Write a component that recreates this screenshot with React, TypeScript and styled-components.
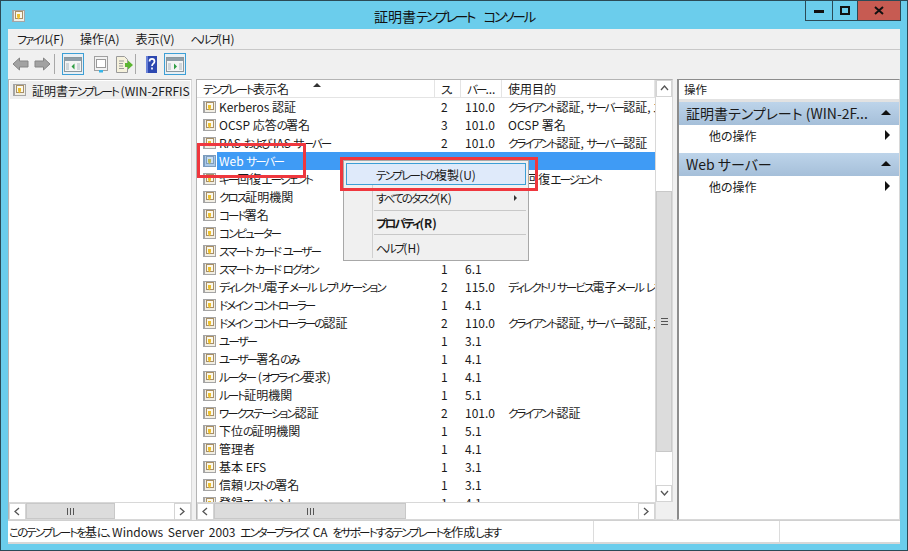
import React from 'react'
import styled, { createGlobalStyle } from 'styled-components'

const Global = createGlobalStyle`
  html, body { margin: 0; padding: 0; background: #6bcdec; }
  * { box-sizing: border-box; }
`

const Frame = styled.div`
  position: relative;
  width: 908px;
  height: 551px;
  background: #6bcdec;
  border: 1px solid #2b4a56;
  font-family: "Noto Sans CJK JP", "Liberation Sans", sans-serif;
  font-feature-settings: "palt";
  font-size: 12px;
  color: #1a1a1a;
  display: flex;
  flex-direction: column;
  overflow: hidden;
`
const KanaRun = styled.span`
  font-size: 0.96em;
  letter-spacing: -0.165em;
`
const TitleBar = styled.div`
  height: 28px;
  flex: none;
  display: flex;
  align-items: flex-start;
  padding-left: 11px;
  position: relative;
`
const AppIcon = styled.div`
  margin-top: 7px;
`
const TitleText = styled.div`
  position: absolute;
  left: 0;
  right: 0;
  top: 5px;
  text-align: center;
  font-size: 14px;
  word-spacing: 6px;
  line-height: 20px;
  color: #111;
`
const Controls = styled.div`
  margin-left: auto;
  margin-right: 6px;
  display: flex;
  height: 20px;
  border: 1px solid #2b4a56;
  border-top: 0;
`
const Control = styled.div<{ $w: number; $close?: boolean }>`
  width: ${p => p.$w}px;
  display: flex;
  align-items: center;
  justify-content: center;
  background: ${p => (p.$close ? '#c75b52' : 'transparent')};
  & + & { border-left: 1px solid #2b4a56; }
`
const Client = styled.div`
  margin: 0 7px;
  flex: 1;
  min-height: 0;
  display: flex;
  flex-direction: column;
  background: #f0f0f0;
`
const MenuBar = styled.div`
  height: 21px;
  flex: none;
  display: flex;
  gap: 16px;
  align-items: center;
  padding: 0 0 2px 9px;
  border-bottom: 1px solid #c8c8c8;
`
const ToolBar = styled.div`
  height: 28px;
  flex: none;
  display: flex;
  align-items: center;
  padding-left: 4px;
`
const ToolArrow = styled.div<{ $ml: number }>`
  margin-left: ${p => p.$ml}px;
  display: flex;
`
const ToolSep = styled.div<{ $ml: number }>`
  width: 1px;
  height: 20px;
  background: #a8a8a8;
  margin-left: ${p => p.$ml}px;
`
const ToolButton = styled.div<{ $active?: boolean; $ml: number }>`
  width: 22px;
  height: 22px;
  margin-left: ${p => p.$ml}px;
  display: flex;
  align-items: center;
  justify-content: center;
  border: 1px solid ${p => (p.$active ? '#3c9fd6' : 'transparent')};
  background: ${p => (p.$active ? '#e8eff4' : 'transparent')};
`
const Panes = styled.div`
  flex: 1;
  min-height: 0;
  display: flex;
  gap: 4px;
  padding-top: 1px;
`
const Pane = styled.div<{ $w: number; $strong?: boolean }>`
  width: ${p => p.$w}px;
  flex: none;
  display: flex;
  flex-direction: column;
  background: #fff;
  border: 1px solid ${p => (p.$strong ? '#8c8c8c' : '#b4b4b4')};
  border-left-width: ${p => (p.$strong ? '2px' : '1px')};
  border-right-color: #d8d8d8;
  border-bottom-color: #d8d8d8;
`
const TreeBody = styled.div`
  flex: 1;
  padding: 1px;
`
const TreeRow = styled.div`
  height: 18px;
  display: flex;
  align-items: center;
  gap: 6px;
  padding-left: 3px;
  background: #eeeeee;
  white-space: nowrap;
  overflow: hidden;
`
const HScroll = styled.div`
  height: 17px;
  flex: none;
  display: flex;
  background: #fff;
  border-top: 1px solid #d8d8d8;
`
const ScrollBtn = styled.div<{ $h?: boolean }>`
  width: ${p => (p.$h ? '17px' : '100%')};
  height: 17px;
  flex: none;
  display: flex;
  align-items: center;
  justify-content: center;
  background: #fff;
  border: 1px solid #d4d4d4;
`
const Thumb = styled.div<{ $w: number }>`
  width: ${p => p.$w}px;
  flex: none;
  background: #dcdcdc;
  border: 1px solid #c8c8c8;
  display: flex;
  align-items: center;
  justify-content: center;
`
const Grow = styled.div`
  flex: 1;
`
const Header = styled.div`
  height: 18px;
  flex: none;
  display: flex;
  background: #fff;
  border-bottom: 1px solid #e4e4e4;
  position: relative;
`
const HeaderCell = styled.div<{ $w: number }>`
  width: ${p => p.$w}px;
  flex: none;
  padding-left: 6px;
  line-height: 17px;
  border-right: 1px solid #e4e4e4;
  white-space: nowrap;
  overflow: hidden;
`
const SortMark = styled.div`
  position: absolute;
  left: 116px;
  top: 3px;
  width: 0;
  height: 0;
  border-left: 4px solid transparent;
  border-right: 4px solid transparent;
  border-bottom: 4px solid #333;
`
const ListArea = styled.div`
  flex: 1;
  min-height: 0;
  display: flex;
`
const ListCol = styled.div`
  flex: 1;
  min-width: 0;
  display: flex;
  flex-direction: column;
`
const Rows = styled.div`
  flex: 1;
  min-height: 0;
  overflow: hidden;
`
const Row = styled.div`
  height: 18px;
  display: flex;
  align-items: center;
  white-space: nowrap;
`
const NameCell = styled.div`
  width: 238px;
  flex: none;
  display: flex;
  align-items: center;
  gap: 3px;
  padding-left: 6px;
  height: 18px;
  overflow: hidden;
`
const NameText = styled.div`
  padding-bottom: 2px;
`
const SelBand = styled.div`
  flex: 1;
  height: 18px;
  margin-left: -218px;
  background: #3f9bf5;
  color: #fff;
  display: flex;
  align-items: center;
`
const SelName = styled.div`
  width: 218px;
  flex: none;
  padding: 0 0 2px 2px;
`
const Cell = styled.div<{ $w: number; $pad?: number }>`
  width: ${p => p.$w}px;
  flex: none;
  padding: 0 0 2px ${p => p.$pad ?? 6}px;
  overflow: hidden;
`
const VScroll = styled.div`
  width: 17px;
  flex: none;
  display: flex;
  flex-direction: column;
  background: #fff;
  border-left: 1px solid #d8d8d8;
`
const VThumb = styled.div`
  height: 261px;
  margin-top: 94px;
  background: #dcdcdc;
  border: 1px solid #c8c8c8;
  display: flex;
  align-items: center;
  justify-content: center;
`
const Corner = styled.div`
  width: 17px;
  height: 17px;
  flex: none;
  background: #f0f0f0;
`
const ActionsTitle = styled.div`
  height: 22px;
  flex: none;
  line-height: 18px;
  padding-left: 5px;
  font-size: 11.5px;
  background: #fff;
  border-bottom: 3px solid #e2e2e2;
`
const ActionsGroup = styled.div`
  height: 23px;
  flex: none;
  display: flex;
  align-items: center;
  justify-content: space-between;
  padding: 0 8px 2px 7px;
  background: linear-gradient(#bdd4ea, #a5bfd9);
  font-size: 14px;
  white-space: nowrap;
`
const ActionItem = styled.div`
  height: 28px;
  flex: none;
  display: flex;
  justify-content: space-between;
  padding: 2px 9px 0 30px;
  line-height: 17px;
`
const UpTri = styled.div`
  width: 0;
  height: 0;
  border-left: 5px solid transparent;
  border-right: 5px solid transparent;
  border-bottom: 5px solid #111;
`
const RightTri = styled.div`
  margin-top: 3px;
  width: 0;
  height: 0;
  border-top: 5px solid transparent;
  border-bottom: 5px solid transparent;
  border-left: 5px solid #111;
`
const StatusBar = styled.div`
  height: 24px;
  flex: none;
  display: grid;
  grid-template-columns: 585px 186px 1fr;
  background: #fff;
  border-top: 1px solid #d0d0d0;
  border-bottom: 2px solid #d8d8d8;
  font-size: 12px;
  word-spacing: 2px;
  line-height: 22px;
`
const StatusCell = styled.div`
  padding-left: 1px;
  white-space: nowrap;
  overflow: hidden;
  & + & { border-left: 1px solid #dcdcdc; }
`
const BottomEdge = styled.div`
  height: 6px;
  flex: none;
`
const PopMenu = styled.div`
  position: absolute;
  left: 342px;
  top: 159px;
  width: 186px;
  height: 101px;
  background: #f0f0f0;
  border: 1px solid #a8a8a8;
  padding: 2px;
  z-index: 2;
`
const PopItem = styled.div<{ $hot?: boolean; $h: number }>`
  height: ${p => p.$h}px;
  padding-left: ${p => (p.$hot ? '29px' : '30px')};
  display: flex;
  justify-content: space-between;
  align-items: center;
  border: ${p => (p.$hot ? '1px solid #3c9fd6' : '0')};
  background: ${p => (p.$hot ? '#dfeafa' : 'transparent')};
`
const PopSep = styled.div`
  height: 1px;
  margin-left: 28px;
  background: #c8c8c8;
`
const PopGutter = styled.div`
  position: absolute;
  left: 28px;
  top: 24px;
  bottom: 2px;
  width: 1px;
  background: #d0d0d0;
`
const MiniTri = styled.div`
  margin-right: 9px;
  width: 0;
  height: 0;
  border-top: 3px solid transparent;
  border-bottom: 3px solid transparent;
  border-left: 3px solid #333;
`
const RedBox = styled.div<{ $l: number; $t: number; $w: number; $h: number }>`
  position: absolute;
  left: ${p => p.$l}px;
  top: ${p => p.$t}px;
  width: ${p => p.$w}px;
  height: ${p => p.$h}px;
  border: 3px solid #ef373e;
  z-index: 3;
`

// kana in the reference font is much narrower than in Noto, so squeeze those runs only
const Jp = ({ children }: { children: string }) => (
  <span>
    {children.split(/([\u3040-\u30ff]+)/).map((part, i) =>
      i % 2 ? <KanaRun key={i}>{part}</KanaRun> : part,
    )}
  </span>
)

const DocIcon = ({ sel }: { sel?: boolean }) => (
  <svg width="13" height="12" viewBox="0 0 13 12" style={{ flex: 'none' }}>
    <rect x="0.5" y="0.5" width="12" height="11" fill={sel ? '#a9c9ea' : '#f1eee4'} stroke={sel ? '#7c9cbd' : '#a5a5a5'} />
    <rect x="0" y="0" width="2" height="12" fill={sel ? '#7c9cbd' : '#a5a5a5'} />
    <rect x="3.500" y="1.500" width="7" height="7" fill={sel ? '#c9def3' : '#fbf8ec'} stroke={sel ? '#7f9dbd' : '#a88f66'} />
    <path d="M5 4h3v3l-1.500 2.500L5 7z" fill={sel ? '#b9b95e' : '#edc02e'} />
  </svg>
)
const Arrow = ({ flip }: { flip?: boolean }) => (
  <svg width="17" height="14" viewBox="0 0 17 14" style={flip ? { transform: 'scaleX(-1)' } : undefined}>
    <path d="M1 7l6.500-6v3H16v6H7.500v3z" fill="#a2a2a2" stroke="#858585" />
  </svg>
)
const PaneIcon = ({ right }: { right?: boolean }) => (
  <svg width="18" height="15" viewBox="0 0 18 15">
    <rect x="0.5" y="0.5" width="17" height="14" fill="#f4f4f4" stroke="#8a979e" />
    <rect x="1" y="1" width="16" height="3" fill="#8f9ea8" />
    <rect x="2" y="6" width="3" height="7" fill="#cfd6da" />
    <rect x="13" y="6" width="3" height="7" fill="#cfd6da" />
    <path d={right ? 'M8 6.500l3 3-3 3z' : 'M10.500 6.500l-3 3 3 3z'} fill="#2f9e44" />
  </svg>
)
const SheetIcon = () => (
  <svg width="16" height="17" viewBox="0 0 16 17">
    <rect x="1.500" y="0.500" width="13" height="14" fill="#f2f2f2" stroke="#a0a0a0" />
    <rect x="3.500" y="3.500" width="9" height="8" fill="#fff" stroke="#9a9a9a" />
    <rect x="6" y="14" width="4" height="2.500" fill="#35b5e8" />
  </svg>
)
const ExportIcon = () => (
  <svg width="19" height="17" viewBox="0 0 19 17">
    <path d="M1.500.5h8l3 3v13h-11z" fill="#f5f1dc" stroke="#9a9a9a" />
    <path d="M4 5h5M4 7.500h4M4 10h4M4 12.500h5" stroke="#9a9a9a" />
    <path d="M10 7h3V4.500l5 4.500-5 4.500V11h-3z" fill="#5cb531" />
  </svg>
)
const HelpIcon = () => (
  <svg width="11" height="17" viewBox="0 0 11 17">
    <rect width="11" height="17" fill="#2d48b0" />
    <rect width="2" height="17" fill="#6a82d8" />
    <path d="M3.500 5.500c0-3.500 5-3.500 5 0 0 2.200-2.500 2.200-2.500 4.500M6 11.500v2" stroke="#fff" strokeWidth="1.700" fill="none" />
  </svg>
)
const Chevron = ({ dir }: { dir: 'l' | 'r' | 'u' | 'd' }) => {
  const paths = { l: 'M6 1L2 4.500 6 8', r: 'M2 1l4 3.500L2 8', u: 'M1 6l3.500-4L8 6', d: 'M1 2l3.500 4L8 2' }
  return (
    <svg width="9" height="9" viewBox="0 0 9 9">
      <path d={paths[dir]} fill="none" stroke="#555" strokeWidth="1.300" />
    </svg>
  )
}
const GripH = () => (
  <svg width="7" height="7" viewBox="0 0 7 7">
    <path d="M.5 0v7M3.500 0v7M6.500 0v7" stroke="#555" />
  </svg>
)
const GripV = () => (
  <svg width="7" height="7" viewBox="0 0 7 7">
    <path d="M0 .5h7M0 3.500h7M0 6.500h7" stroke="#555" />
  </svg>
)

const templates: [string, string, string, string][] = [
  ['Kerberos 認証', '2', '110.0', 'クライアント認証, サーバー認証, スマート カード ログオン'],
  ['OCSP 応答の署名', '3', '101.0', 'OCSP 署名'],
  ['RAS および IAS サーバー', '2', '101.0', 'クライアント認証, サーバー認証'],
  ['Web サーバー', '1', '3.1', ''],
  ['キー回復エージェント', '', '', 'キー回復エージェント'],
  ['クロス証明機関', '', '', ''],
  ['コード署名', '', '', ''],
  ['コンピューター', '', '', ''],
  ['スマート カード ユーザー', '', '', ''],
  ['スマート カード ログオン', '1', '6.1', ''],
  ['ディレクトリ電子メール レプリケーション', '2', '115.0', 'ディレクトリ サービス電子メール レプリケーション'],
  ['ドメイン コントローラー', '1', '4.1', ''],
  ['ドメイン コントローラーの認証', '2', '110.0', 'クライアント認証, サーバー認証, スマート カード ログオン'],
  ['ユーザー', '1', '3.1', ''],
  ['ユーザー署名のみ', '1', '4.1', ''],
  ['ルーター (オフライン要求)', '1', '4.1', ''],
  ['ルート証明機関', '1', '5.1', ''],
  ['ワークステーション認証', '2', '101.0', 'クライアント認証'],
  ['下位の証明機関', '1', '5.1', ''],
  ['管理者', '1', '4.1', ''],
  ['基本 EFS', '1', '3.1', ''],
  ['信頼リストの署名', '1', '3.1', ''],
  ['登録エージェント', '1', '4.1', ''],
]

const App = () => (
  <Frame>
    <Global />
    <TitleBar>
      <AppIcon><DocIcon /></AppIcon>
      <TitleText><Jp>証明書テンプレート コンソール</Jp></TitleText>
      <Controls>
        <Control $w={26}>
          <svg width="10" height="4"><rect width="10" height="3" y="1" fill="#111" /></svg>
        </Control>
        <Control $w={25}>
          <svg width="10" height="10"><rect x="1" y="1" width="8" height="7" fill="none" stroke="#111" strokeWidth="2" /></svg>
        </Control>
        <Control $w={43} $close>
          <svg width="10" height="9"><path d="M1 1l8 7M9 1L1 8" stroke="#111" strokeWidth="2" /></svg>
        </Control>
      </Controls>
    </TitleBar>
    <Client>
      <MenuBar>
        <Jp>ファイル(F)</Jp>
        <Jp>操作(A)</Jp>
        <Jp>表示(V)</Jp>
        <Jp>ヘルプ(H)</Jp>
      </MenuBar>
      <ToolBar>
        <ToolArrow $ml={0}><Arrow /></ToolArrow>
        <ToolArrow $ml={5}><Arrow flip /></ToolArrow>
        <ToolSep $ml={3} />
        <ToolButton $active $ml={7}><PaneIcon /></ToolButton>
        <ToolButton $ml={6}><SheetIcon /></ToolButton>
        <ToolButton $ml={1}><ExportIcon /></ToolButton>
        <ToolSep $ml={0} />
        <ToolButton $ml={4}><HelpIcon /></ToolButton>
        <ToolButton $active $ml={2}><PaneIcon right /></ToolButton>
      </ToolBar>
      <Panes>
        <Pane $w={184}>
          <TreeBody>
            <TreeRow><DocIcon /><Jp>証明書テンプレート (WIN-2FRFIS</Jp></TreeRow>
          </TreeBody>
          <HScroll>
            <ScrollBtn $h><Chevron dir="l" /></ScrollBtn>
            <Thumb $w={89}><GripH /></Thumb>
            <Grow />
            <ScrollBtn $h><Chevron dir="r" /></ScrollBtn>
          </HScroll>
        </Pane>
        <Pane $w={477}>
          <ListArea>
            <ListCol>
              <Header>
                <HeaderCell $w={238}><Jp>テンプレート表示名</Jp></HeaderCell>
                <HeaderCell $w={26}><Jp>ス.</Jp></HeaderCell>
                <HeaderCell $w={41}><Jp>バー...</Jp></HeaderCell>
                <HeaderCell $w={153}>使用目的</HeaderCell>
                <SortMark />
              </Header>
              <Rows>
                {templates.map(([name, a, b, c]) =>
                  name === 'Web サーバー' ? (
                    <Row key={name}>
                      <NameCell><DocIcon sel /></NameCell>
                      <SelBand>
                        <SelName><Jp>{name}</Jp></SelName>
                        <Cell $w={26}>{a}</Cell>
                        <Cell $w={41} $pad={4}>{b}</Cell>
                      </SelBand>
                    </Row>
                  ) : (
                    <Row key={name}>
                      <NameCell><DocIcon /><NameText><Jp>{name}</Jp></NameText></NameCell>
                      <Cell $w={26}>{a}</Cell>
                      <Cell $w={41} $pad={4}>{b}</Cell>
                      <Cell $w={153}><Jp>{c}</Jp></Cell>
                    </Row>
                  ),
                )}
              </Rows>
              <HScroll>
                <ScrollBtn $h><Chevron dir="l" /></ScrollBtn>
                <Thumb $w={192}><GripH /></Thumb>
                <Grow />
                <ScrollBtn $h><Chevron dir="r" /></ScrollBtn>
              </HScroll>
            </ListCol>
            <VScroll>
              <ScrollBtn><Chevron dir="u" /></ScrollBtn>
              <VThumb><GripV /></VThumb>
              <Grow />
              <ScrollBtn><Chevron dir="d" /></ScrollBtn>
              <Corner />
            </VScroll>
          </ListArea>
        </Pane>
        <Pane $w={223} $strong>
          <ActionsTitle>操作</ActionsTitle>
          <ActionsGroup>証明書テンプレート (WIN-2F...<UpTri /></ActionsGroup>
          <ActionItem>他の操作<RightTri /></ActionItem>
          <ActionsGroup>Web サーバー<UpTri /></ActionsGroup>
          <ActionItem>他の操作<RightTri /></ActionItem>
        </Pane>
      </Panes>
      <StatusBar>
        <StatusCell><Jp>このテンプレートを基に、Windows Server 2003 エンタープライズ CA をサポートするテンプレートを作成します</Jp></StatusCell>
        <StatusCell />
        <StatusCell />
      </StatusBar>
    </Client>
    <BottomEdge />
    <PopMenu>
      <PopGutter />
      <PopItem $hot $h={22}><Jp>テンプレートの複製(U)</Jp></PopItem>
      <PopItem $h={25}><Jp>すべてのタスク(K)</Jp><MiniTri /></PopItem>
      <PopSep />
      <PopItem $h={23}><b><Jp>プロパティ(R)</Jp></b></PopItem>
      <PopSep />
      <PopItem $h={24}><Jp>ヘルプ(H)</Jp></PopItem>
    </PopMenu>
    <RedBox $l={196} $t={142} $w={109} $h={35} />
    <RedBox $l={339} $t={156} $w={198} $h={34} />
  </Frame>
)

export default App
